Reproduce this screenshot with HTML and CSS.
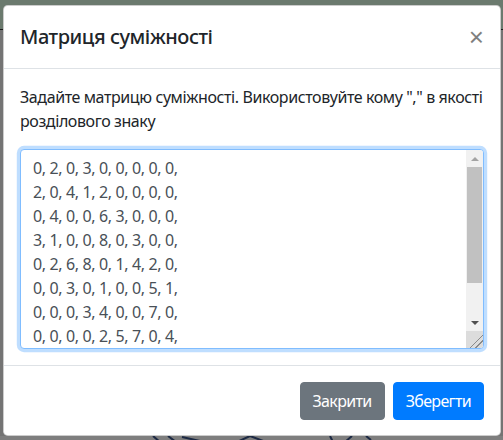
FILE: index.html
```html
<!DOCTYPE html>
<html lang="uk">
<head>
<meta charset="utf-8">
<title>Матриця суміжності</title>
<link rel="stylesheet" href="styles.css">
</head>
<body>
<div class="modal">
  <div class="modal-header">
    <h5 class="modal-title">Матриця суміжності</h5>
    <button class="close" type="button" aria-label="Close">×</button>
  </div>
  <div class="modal-body">
    <p class="hint">Задайте матрицю суміжності. Використовуйте кому "," в якості розділового знаку</p>
    <div class="matrix-box">
      <textarea class="matrix" spellcheck="false">0, 2, 0, 3, 0, 0, 0, 0, 0,
2, 0, 4, 1, 2, 0, 0, 0, 0,
0, 4, 0, 0, 6, 3, 0, 0, 0,
3, 1, 0, 0, 8, 0, 3, 0, 0,
0, 2, 6, 8, 0, 1, 4, 2, 0,
0, 0, 3, 0, 1, 0, 0, 5, 1,
0, 0, 0, 3, 4, 0, 0, 7, 0,
0, 0, 0, 0, 2, 5, 7, 0, 4,
0, 0, 0, 0, 0, 1, 0, 4, 0</textarea>
      <div class="vscroll" aria-hidden="true">
        <span class="sb-btn"><span class="arrow-up"></span></span>
        <span class="sb-track"><span class="sb-thumb"></span></span>
        <span class="sb-btn"><span class="arrow-down"></span></span>
        <span class="sb-grip"></span>
      </div>
    </div>
  </div>
  <div class="modal-footer">
    <button class="btn btn-secondary" type="button">Закрити</button>
    <button class="btn btn-primary" type="button">Зберегти</button>
  </div>
</div>
<div class="under">
  <svg width="503" height="6" viewBox="0 0 503 6">
    <g stroke="#1d2a44" stroke-width="2" fill="none">
      <path d="M153 0 L160 6"/>
      <path d="M168 0 L176 6 M182 1 L200 5"/>
      <path d="M237 6 L250 0 L266 6"/>
      <path d="M330 0 L333 6 M345 6 L352 0"/>
      <path d="M366 0 L371 4"/>
    </g>
  </svg>
</div>
</body>
</html>
```
FILE: styles.css
```css
html, body {
  margin: 0;
  padding: 0;
}
body {
  width: 503px;
  height: 440px;
  overflow: hidden;
  background: linear-gradient(to bottom, #6b7a6e 0, #6b7a6e 29px, #1b1b1b 29px, #1b1b1b 30px, #747474 30px, #747474 436px, #7e7e7e 436px);
  font-family: "Noto Sans", "Open Sans", sans-serif;
  letter-spacing: -0.4px;
  color: #212529;
  display: flex;
  flex-direction: column;
}
.modal {
  margin: 5px 2px 0 3px;
  width: 498px;
  box-sizing: border-box;
  background: #fff;
  border: 1px solid rgba(0,0,0,.2);
  border-radius: 4.8px;
  display: flex;
  flex-direction: column;
}
.modal-header {
  display: flex;
  align-items: flex-start;
  justify-content: space-between;
  padding: 16px;
  border-bottom: 1px solid #dee2e6;
}
.modal-title {
  margin: 0;
  font-size: 20px;
  font-weight: 500;
  line-height: 30px;
  letter-spacing: -0.45px;
}
.close {
  border: 0;
  background: transparent;
  padding: 0;
  margin: 0;
  font-family: "Liberation Sans", sans-serif;
  font-size: 26px;
  font-weight: 400;
  line-height: 30px;
  color: #000;
  opacity: .5;
}
.modal-body {
  padding: 16px;
  display: flex;
  flex-direction: column;
}
.hint {
  margin: 0 0 16px;
  font-size: 16px;
  line-height: 24px;
}
.matrix-box {
  display: flex;
  height: 200px;
  box-sizing: border-box;
  border: 1px solid #80bdff;
  border-radius: 4px;
  box-shadow: 0 0 0 3.2px rgba(0,123,255,.25);
  background: #fff;
  overflow: hidden;
}
.matrix {
  flex: 1;
  min-width: 0;
  box-sizing: border-box;
  margin: 0;
  padding: 6px 12px;
  font-family: "Noto Sans", "Open Sans", sans-serif;
  font-size: 16px;
  line-height: 24px;
  letter-spacing: -0.37px;
  color: #495057;
  background: transparent;
  border: 0;
  outline: 0;
  resize: none;
  overflow: hidden;
}
.vscroll {
  width: 17px;
  display: flex;
  flex-direction: column;
  background: #f1f1f1;
}
.sb-btn {
  height: 17px;
  flex: none;
  display: flex;
  align-items: center;
  justify-content: center;
}
.arrow-up {
  width: 0;
  height: 0;
  border-left: 4px solid transparent;
  border-right: 4px solid transparent;
  border-bottom: 4px solid #a3a3a3;
}
.arrow-down {
  width: 0;
  height: 0;
  border-left: 4px solid transparent;
  border-right: 4px solid transparent;
  border-top: 4px solid #505050;
}
.sb-track {
  flex: 1;
  display: flex;
  flex-direction: column;
  padding: 0 1px;
}
.sb-thumb {
  height: 116px;
  background: #c1c1c1;
}
.sb-grip {
  height: 17px;
  flex: none;
  background: linear-gradient(135deg, #dcdcdc 0, #dcdcdc 60%, #8a8a8a 60%, #8a8a8a 64%, #dcdcdc 64%, #dcdcdc 76%, #8a8a8a 76%, #8a8a8a 80%, #dcdcdc 80%);
}
.modal-footer {
  display: flex;
  justify-content: flex-end;
  align-items: center;
  padding: 12px 12px 11px;
  border-top: 1px solid #dee2e6;
}
.btn {
  margin: 4px;
  padding: 6px 12px;
  font-family: "Noto Sans", "Open Sans", sans-serif;
  font-size: 16px;
  line-height: 24px;
  letter-spacing: -0.65px;
  color: #fff;
  border: 1px solid transparent;
  border-radius: 4px;
}
.btn-secondary {
  background: #6c757d;
  border-color: #6c757d;
}
.btn-primary {
  background: #007bff;
  border-color: #007bff;
}
.under {
  height: 4px;
  overflow: hidden;
  display: flex;
}
```
